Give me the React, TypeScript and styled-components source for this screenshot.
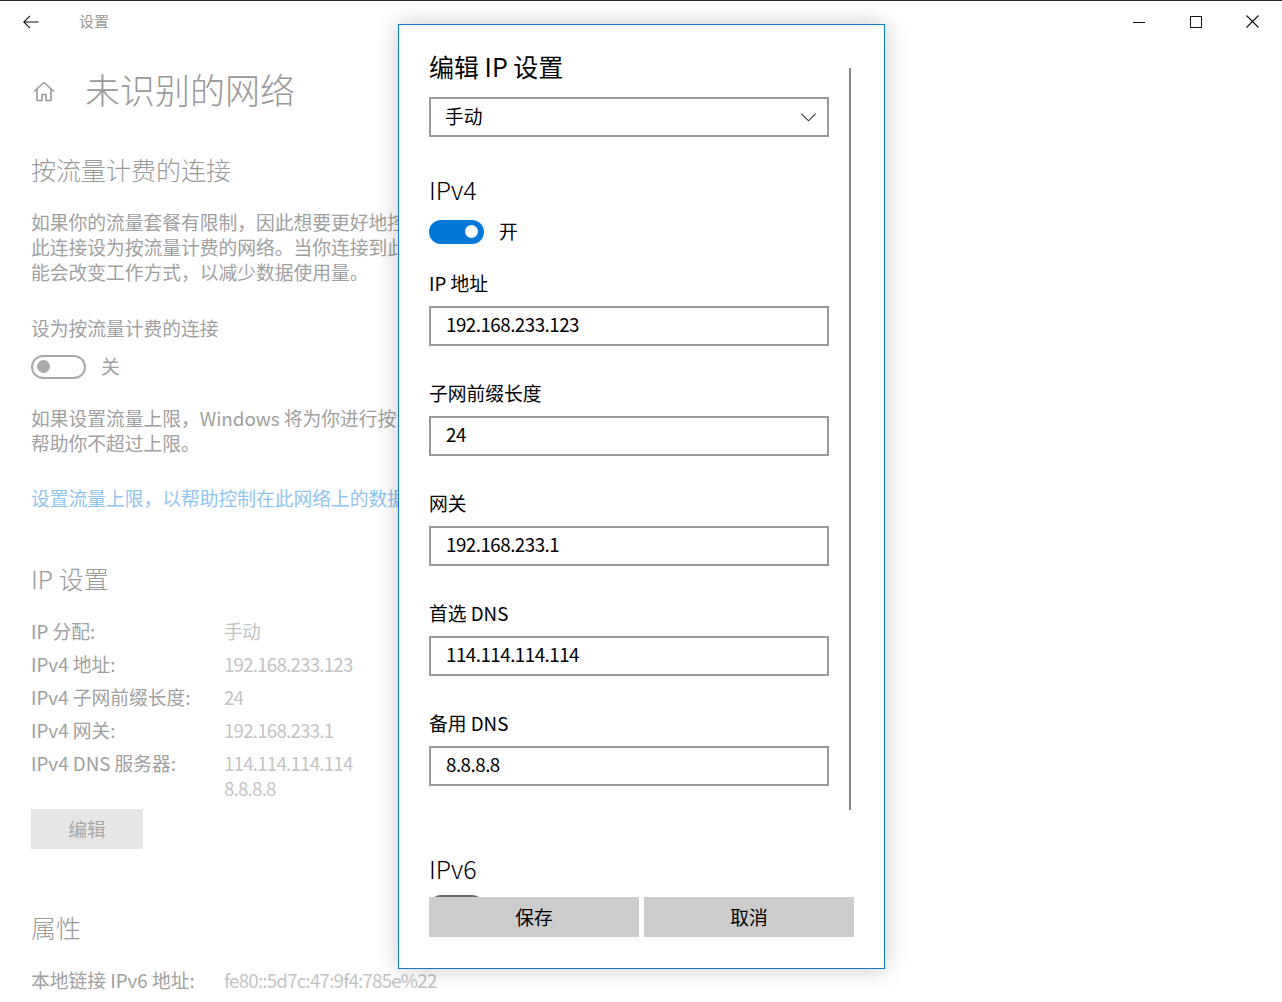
import React from "react";
import styled, { createGlobalStyle } from "styled-components";

const GlobalStyle = createGlobalStyle`
  html, body { margin: 0; padding: 0; background: #fff; }
  body { font-family: "Noto Sans CJK SC", "Noto Sans", sans-serif; }
  * { box-sizing: border-box; }
`;

const Window = styled.div`
  position: relative;
  width: 1282px;
  height: 1002px;
  overflow: hidden;
  background: #fff;
  border-top: 1px solid #2a2a2a;
`;

const TitleBar = styled.div`
  display: flex;
  align-items: center;
  height: 41px;
  padding-left: 23px;
`;

const TitleText = styled.span`
  margin-left: 40px;
  padding-bottom: 2px;
  font-size: 15px;
  color: #999;
`;

const Controls = styled.div`
  margin-left: auto;
  display: flex;
  height: 41px;
  padding-right: 1px;
`;

const CtrlButton = styled.div`
  width: 57px;
  height: 41px;
  display: flex;
  align-items: center;
  justify-content: center;
`;

// left settings page; the dialog lies over its right part
const Page = styled.div`
  padding-left: 31px;
  color: #9d9d9d;
`;

const Header = styled.div`
  display: flex;
  align-items: center;
  gap: 30px;
  height: 50px;
  margin-top: 24px;
  padding-left: 2px;
`;

const PageTitle = styled.h1`
  margin: 0;
  padding-bottom: 4px;
  font-size: 35px;
  line-height: 46px;
  font-weight: 300;
  color: #999;
  white-space: nowrap;
`;

// text blocks sit 2px higher than their box, to match the reference font's baseline
const SectionTitle = styled.h2<{ $mt: number }>`
  margin: ${({ $mt }) => $mt - 2}px 0 0;
  padding-bottom: 2px;
  font-size: 25px;
  line-height: 34px;
  font-weight: 300;
  color: #9a9a9a;
  white-space: nowrap;
`;

const Para = styled.p<{ $mt: number }>`
  margin: ${({ $mt }) => $mt - 2}px 0 0;
  padding-bottom: 2px;
  font-size: 18.75px;
  line-height: 25px;
  white-space: nowrap;
  color: #a0a0a0;
`;

const LinkText = styled(Para)`
  color: #8fc4ee;
`;

const ToggleRow = styled.div<{ $mt: number; $dark?: boolean }>`
  display: flex;
  align-items: center;
  gap: 15px;
  height: 25px;
  margin-top: ${({ $mt }) => $mt}px;
  font-size: 18.75px;
  color: ${({ $dark }) => ($dark ? "#000" : "#a0a0a0")};
`;

const ToggleLabel = styled.span`
  padding-bottom: 2px;
`;

const Toggle = styled.span<{ $on?: boolean; $tone?: string }>`
  position: relative;
  display: inline-block;
  width: 55px;
  height: 24px;
  border-radius: 12px;
  border: 2px solid ${({ $on, $tone }) => ($on ? "#0078d7" : $tone || "#aaa")};
  background: ${({ $on }) => ($on ? "#0078d7" : "transparent")};
  flex-shrink: 0;
  &::after {
    content: "";
    position: absolute;
    top: 50%;
    margin-top: -6.5px;
    width: 13px;
    height: 13px;
    border-radius: 50%;
    background: ${({ $on, $tone }) => ($on ? "#fff" : $tone || "#aaa")};
    ${({ $on }) => ($on ? "right: 4px;" : "left: 4px;")}
  }
`;

const InfoGrid = styled.div<{ $mt: number }>`
  display: grid;
  grid-template-columns: 193px auto;
  row-gap: 8px;
  margin-top: ${({ $mt }) => $mt - 2}px;
  padding-bottom: 2px;
  font-size: 18.75px;
  line-height: 25px;
`;

const InfoLabel = styled.span`
  color: #a0a0a0;
  white-space: nowrap;
`;

const InfoValue = styled.span`
  color: #c3c3c3;
  white-space: nowrap;
  letter-spacing: -0.8px;
`;

const EditButton = styled.button`
  display: block;
  margin-top: 7.5px;
  width: 112px;
  height: 40px;
  border: 0;
  padding: 0 0 2px;
  background: #e6e6e6;
  color: #a8a8a8;
  font-family: inherit;
  font-size: 18.75px;
`;

const Dialog = styled.div`
  position: absolute;
  left: 398px;
  top: 23px;
  width: 487px;
  height: 945px;
  border: 1px solid #0a7ad6;
  background: #fff;
  box-shadow: 0 0 22px rgba(0, 0, 0, 0.22);
  display: flex;
  flex-direction: column;
  color: #000;
`;

const ScrollArea = styled.div`
  position: relative;
  flex: 1;
  overflow: hidden;
  padding: 26px 0 0 30px;
`;

const ScrollThumb = styled.div`
  position: absolute;
  left: 450px;
  top: 43px;
  width: 2px;
  height: 742px;
  background: #868686;
`;

const DialogTitle = styled.h2`
  margin: 0;
  padding-bottom: 4px;
  font-size: 25px;
  line-height: 30px;
  font-weight: 400;
`;

const Select = styled.div`
  margin-top: 12px;
  width: 400px;
  height: 40px;
  border: 2px solid #999;
  display: flex;
  align-items: center;
  justify-content: space-between;
  padding: 0 11px 0 14px;
  font-size: 18.75px;
`;

const SelectText = styled.span`
  padding-bottom: 4px;
`;

const GroupTitle = styled.h3<{ $mt: number }>`
  margin: ${({ $mt }) => $mt - 2}px 0 0;
  padding-bottom: 2px;
  font-size: 25px;
  line-height: 34px;
  font-weight: 300;
  color: #000;
`;

const FieldLabel = styled.div<{ $mt: number }>`
  margin-top: ${({ $mt }) => $mt - 2}px;
  padding-bottom: 2px;
  font-size: 18.75px;
  line-height: 25px;
`;

const InputBox = styled.div`
  margin-top: 9px;
  width: 400px;
  height: 40px;
  border: 2px solid #999;
  display: flex;
  align-items: center;
  padding: 0 0 4px 15px;
  font-size: 18.75px;
  letter-spacing: -0.5px;
`;

const Footer = styled.div`
  display: flex;
  gap: 5px;
  padding: 0 30px 31px 30px;
`;

const FooterButton = styled.button`
  flex: 1;
  height: 40px;
  border: 0;
  padding: 0 0 2px;
  background: #cccccc;
  color: #000;
  font-family: inherit;
  font-size: 18.75px;
`;

const BackIcon = () => (
  <svg width="16" height="14" viewBox="0 0 16 14" fill="none" stroke="#111" strokeWidth="1.1">
    <path d="M15.5 7H1M7 0.8L0.8 7L7 13.2" />
  </svg>
);

const HomeIcon = () => (
  <svg width="22" height="21" viewBox="0 0 22 21" fill="none" stroke="#9a9a9a" strokeWidth="1.6" strokeLinejoin="round">
    <path d="M1 10.5L11 1.5L21 10.5" />
    <path d="M4 8V19.5H9V13.5H13V19.5H18V8" />
  </svg>
);

const MinIcon = () => (
  <svg width="12" height="12" viewBox="0 0 12 12" stroke="#111" strokeWidth="1">
    <path d="M0 6.5H12" />
  </svg>
);

const MaxIcon = () => (
  <svg width="12" height="12" viewBox="0 0 12 12" fill="none" stroke="#111" strokeWidth="1">
    <rect x="0.5" y="0.5" width="11" height="11" />
  </svg>
);

const CloseIcon = () => (
  <svg width="13" height="13" viewBox="0 0 13 13" stroke="#111" strokeWidth="1.1">
    <path d="M0.5 0.5L12.5 12.5M12.5 0.5L0.5 12.5" />
  </svg>
);

const Chevron = () => (
  <svg width="15" height="9" viewBox="0 0 15 9" fill="none" stroke="#333" strokeWidth="1.1">
    <path d="M0.5 0.8L7.5 7.8L14.5 0.8" />
  </svg>
);

const fields = [
  { label: "IP 地址", value: "192.168.233.123" },
  { label: "子网前缀长度", value: "24" },
  { label: "网关", value: "192.168.233.1" },
  { label: "首选 DNS", value: "114.114.114.114" },
  { label: "备用 DNS", value: "8.8.8.8" },
];

export default function App() {
  return (
    <>
      <GlobalStyle />
      <Window>
        <TitleBar>
          <BackIcon />
          <TitleText>设置</TitleText>
          <Controls>
            <CtrlButton><MinIcon /></CtrlButton>
            <CtrlButton><MaxIcon /></CtrlButton>
            <CtrlButton><CloseIcon /></CtrlButton>
          </Controls>
        </TitleBar>

        <Page>
          <Header>
            <HomeIcon />
            <PageTitle>未识别的网络</PageTitle>
          </Header>

          <SectionTitle $mt={38}>按流量计费的连接</SectionTitle>
          <Para $mt={22.5}>
            如果你的流量套餐有限制，因此想要更好地控制数据使用量，可以将
            <br />
            此连接设为按流量计费的网络。当你连接到此网络时，某些应用可
            <br />
            能会改变工作方式，以减少数据使用量。
          </Para>

          <Para $mt={31}>设为按流量计费的连接</Para>
          <ToggleRow $mt={12.5}>
            <Toggle />
            <ToggleLabel>关</ToggleLabel>
          </ToggleRow>

          <Para $mt={27.5}>
            如果设置流量上限，Windows 将为你进行按流量计费的连接设置，以
            <br />
            帮助你不超过上限。
          </Para>

          <LinkText $mt={30}>设置流量上限，以帮助控制在此网络上的数据使用量</LinkText>

          <SectionTitle $mt={51.5}>IP 设置</SectionTitle>
          <InfoGrid $mt={22.5}>
            <InfoLabel>IP 分配:</InfoLabel>
            <InfoValue>手动</InfoValue>
            <InfoLabel>IPv4 地址:</InfoLabel>
            <InfoValue>192.168.233.123</InfoValue>
            <InfoLabel>IPv4 子网前缀长度:</InfoLabel>
            <InfoValue>24</InfoValue>
            <InfoLabel>IPv4 网关:</InfoLabel>
            <InfoValue>192.168.233.1</InfoValue>
            <InfoLabel>IPv4 DNS 服务器:</InfoLabel>
            <InfoValue>
              114.114.114.114
              <br />
              8.8.8.8
            </InfoValue>
          </InfoGrid>
          <EditButton>编辑</EditButton>

          <SectionTitle $mt={63}>属性</SectionTitle>
          <InfoGrid $mt={22.5}>
            <InfoLabel>本地链接 IPv6 地址:</InfoLabel>
            <InfoValue>fe80::5d7c:47:9f4:785e%22</InfoValue>
          </InfoGrid>
        </Page>

        <Dialog>
          <ScrollArea>
            <ScrollThumb />
            <DialogTitle>编辑 IP 设置</DialogTitle>
            <Select>
              <SelectText>手动</SelectText>
              <Chevron />
            </Select>

            <GroupTitle $mt={37}>IPv4</GroupTitle>
            <ToggleRow $mt={11} $dark>
              <Toggle $on />
              <ToggleLabel>开</ToggleLabel>
            </ToggleRow>

            {fields.map((f, i) => (
              <React.Fragment key={f.label}>
                <FieldLabel $mt={i === 0 ? 27.5 : 36}>{f.label}</FieldLabel>
                <InputBox>{f.value}</InputBox>
              </React.Fragment>
            ))}

            <GroupTitle $mt={67}>IPv6</GroupTitle>
            <ToggleRow $mt={8} $dark>
              <Toggle $tone="#666" />
            </ToggleRow>
          </ScrollArea>
          <Footer>
            <FooterButton>保存</FooterButton>
            <FooterButton>取消</FooterButton>
          </Footer>
        </Dialog>
      </Window>
    </>
  );
}
